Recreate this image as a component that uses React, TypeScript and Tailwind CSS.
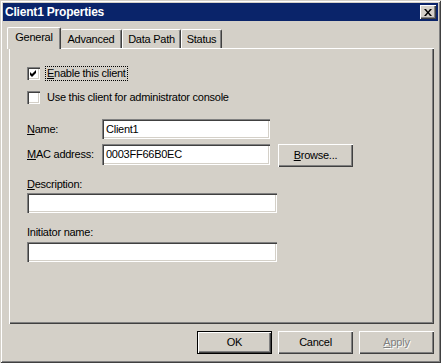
import React from "react";

const sunken =
  "bg-white shadow-[inset_1px_1px_0_#808080,inset_2px_2px_0_#404040,inset_-1px_-1px_0_#ffffff,inset_-2px_-2px_0_#d4d0c8]";
const raised =
  "bg-[#d4d0c8] shadow-[inset_1px_1px_0_#ffffff,inset_-1px_-1px_0_#404040,inset_-2px_-2px_0_#808080]";

const Checkbox: React.FC<{ checked?: boolean }> = ({ checked }) => (
  <div className={`w-[13px] h-[13px] flex items-center justify-center ${sunken}`}>
    {checked && (
      <svg width="7" height="7" viewBox="0 0 7 7">
        <path d="M0 2 L2 4 L6 0 L6 3 L2 7 L0 5 Z" fill="#000" />
      </svg>
    )}
  </div>
);

const TextBox: React.FC<{ value?: string; className: string }> = ({ value, className }) => (
  <div className={`${sunken} ${className} flex items-center pl-[4px] text-black`}>
    {value}
  </div>
);

const Button: React.FC<{
  label: React.ReactNode;
  isDefault?: boolean;
  disabled?: boolean;
}> = ({ label, isDefault, disabled }) => (
  <div
    className={`w-[75px] h-[23px] flex items-center justify-center ${
      isDefault ? "border border-black" : ""
    }`}
  >
    <div
      className={`w-full h-full flex items-center justify-center ${raised} ${
        disabled ? "text-[#808080] [text-shadow:1px_1px_0_#ffffff]" : "text-black"
      }`}
    >
      {label}
    </div>
  </div>
);

const tabs = [
  { label: "General", w: "w-[54px]" },
  { label: "Advanced", w: "w-[61px]" },
  { label: "Data Path", w: "w-[59px]" },
  { label: "Status", w: "w-[41px]" },
];

export default function App() {
  return (
    <div className="w-[441px] h-[363px] bg-[#d4d0c8] p-[3px] flex flex-col font-['Liberation_Sans',Arial,sans-serif] text-[11px] tracking-[-0.25px] text-black shadow-[inset_1px_1px_0_#d4d0c8,inset_-1px_-1px_0_#404040,inset_2px_2px_0_#ffffff,inset_-2px_-2px_0_#808080]">
      {/* title bar */}
      <div className="h-[18px] bg-[#0a246a] flex items-center justify-between pl-[2px] pr-[2px]">
        <span className="text-white font-bold text-[12px] tracking-[-0.2px]">Client1 Properties</span>
        <div className={`w-[16px] h-[14px] flex items-center justify-center ${raised}`}>
          <svg width="8" height="7" viewBox="0 0 8 7">
            <path d="M0 0h2l2 2.5L6 0h2L5 3.5 8 7H6L4 4.5 2 7H0l3-3.5z" fill="#000" />
          </svg>
        </div>
      </div>

      {/* tabs */}
      <div className="mt-[6px] ml-[4px] h-[21px] flex items-start">
        {tabs.map((t, i) =>
          i === 0 ? (
            <div
              key={t.label}
              className={`${t.w} relative z-10 h-[22px] bg-[#d4d0c8] flex items-center justify-center border-l border-t border-white rounded-tl-[2px] rounded-tr-[2px] border-r border-r-[#404040] shadow-[inset_-1px_0_0_#808080] pb-[2px]`}
            >
              {t.label}
            </div>
          ) : (
            <div
              key={t.label}
              className={`${t.w} mt-[2px] h-[19px] flex items-center justify-center border-l border-t border-white rounded-tl-[2px] rounded-tr-[2px] border-r border-r-[#404040] shadow-[inset_-1px_0_0_#808080] ${
                i === 1 ? "border-l-0" : ""
              }`}
            >
              {t.label}
            </div>
          )
        )}
      </div>

      {/* panel */}
      <div className="ml-[6px] w-[425px] h-[276px] bg-[#d4d0c8] shadow-[inset_1px_1px_0_#ffffff,inset_-1px_-1px_0_#404040,inset_-2px_-2px_0_#808080] pl-[18px] pt-[19px] flex flex-col">
        <div className="flex items-center h-[13px] gap-[5px]">
          <Checkbox checked />
          <span className="border border-dotted border-black px-[1px] leading-[13px]">
            <u>E</u>nable this client
          </span>
        </div>
        <div className="flex items-center h-[13px] gap-[6px] mt-[11px]">
          <Checkbox />
          <span className="pl-[1px]">Use this client for administrator console</span>
        </div>

        <div className="flex items-center mt-[15px] h-[20px]">
          <span className="w-[75px]">
            <u>N</u>ame:
          </span>
          <TextBox value="Client1" className="w-[168px] h-[20px]" />
        </div>
        <div className="flex items-start mt-[5px] h-[23px]">
          <span className="w-[75px] h-[21px] flex items-center">
            <u>M</u>AC address:
          </span>
          <TextBox value="0003FF66B0EC" className="w-[168px] h-[21px]" />
          <div className="ml-[8px]">
            <Button
              label={
                <span>
                  <u>B</u>rowse...
                </span>
              }
            />
          </div>
        </div>

        <div className="mt-[11px] h-[13px] flex items-center">
          <span>
            <u>D</u>escription:
          </span>
        </div>
        <TextBox className="mt-[2px] w-[250px] h-[20px]" />

        <div className="mt-[13px] h-[13px] flex items-center">
          <span>Initiator name:</span>
        </div>
        <TextBox className="mt-[3px] w-[250px] h-[20px]" />
      </div>

      {/* buttons */}
      <div className="mt-[7px] pr-[4px] flex justify-end gap-[6px]">
        <Button label="OK" isDefault />
        <Button label="Cancel" />
        <Button
          disabled
          label={
            <span>
              <u>A</u>pply
            </span>
          }
        />
      </div>
    </div>
  );
}
